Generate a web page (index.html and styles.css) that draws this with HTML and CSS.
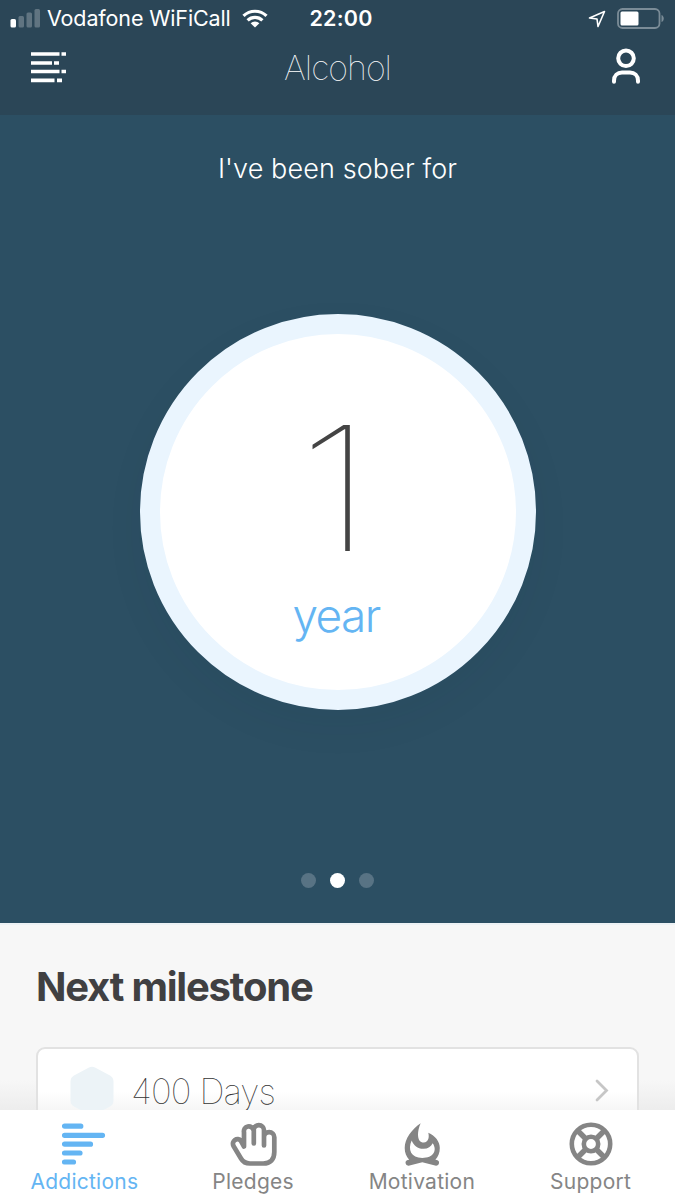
FILE: index.html
```html
<!DOCTYPE html>
<html lang="en">
<head>
<meta charset="utf-8">
<title>Alcohol</title>
<link rel="stylesheet" href="styles.css">
</head>
<body>
<div class="app">
  <header class="header">
    <div class="status">
      <div class="status-left">
        <svg class="signal" width="31" height="19" viewBox="0 0 31 19"><rect x="0.5" y="10" width="5.5" height="8.500" rx="1.500" fill="#fff"/><g fill="#fff" opacity=".25"><rect x="8.500" y="7" width="5.500" height="11.500" rx="1.500"/><rect x="16.500" y="3.500" width="5.500" height="15" rx="1.500"/><rect x="24.500" y="0" width="5.500" height="18.500" rx="1.500"/></g></svg>
        <span class="carrier">Vodafone WiFiCall</span>
        <svg class="wifi" width="26" height="19" viewBox="0 0 26 19"><path d="M1.500 6.900a16.500 16.500 0 0 1 23 0M5.600 11.300a10.600 10.600 0 0 1 14.800 0" fill="none" stroke="#fff" stroke-width="3.200"/><path d="M8.600 14.200a6.300 6.300 0 0 1 8.800 0L13 18.600z" fill="#fff"/></svg>
      </div>
      <span class="clock">22:00</span>
      <div class="status-right">
        <svg width="18" height="18" viewBox="0 0 18 18"><path d="M1.500 8 16.500 1.500 10 16.500 9 9z" fill="none" stroke="#fff" stroke-width="1.600" stroke-linejoin="round"/></svg>
        <svg width="48" height="21" viewBox="0 0 48 21"><rect x="1" y="1" width="41.500" height="19" rx="4.500" fill="none" stroke="#7b8c97" stroke-width="1.800"/><rect x="3.500" y="3.500" width="18" height="14" rx="1.500" fill="#fff"/><path d="M44.500 7c3 1 3 6 0 7z" fill="#7b8c97"/></svg>
      </div>
    </div>
    <nav class="navbar">
      <svg width="36" height="32" viewBox="0 0 36 32"><path d="M0 2h28.500M30.500 2H35M0 11h21M23 11h5M0 19.500h28.500M30.500 19.500H35M0 28.300h23.500M26 28.300h5" stroke="#fff" stroke-width="3.700"/></svg>
      <h1 class="title">Alcohol</h1>
      <svg class="user" width="30" height="36" viewBox="0 0 30 36"><g fill="none" stroke="#fff" stroke-width="4"><circle cx="15" cy="10.300" r="7.800"/><path d="M3 33.700v-1c0-5 3.500-8.200 8-8.200h8c4.500 0 8 3.200 8 8.200v1" stroke-linecap="round"/></g></svg>
    </nav>
  </header>
  <main class="content">
    <section class="hero">
      <p class="lead">I've been sober for</p>
      <div class="counter"><span class="number">1</span><span class="unit">year</span></div>
      <div class="dots"><i class="dot"></i><i class="dot dot-active"></i><i class="dot"></i></div>
    </section>
    <section class="milestone">
      <h2 class="heading">Next milestone</h2>
      <div class="card">
        <svg width="44" height="50" viewBox="0 0 44 50"><path d="M19 1.500q3-1.700 6 0l15 8q3.500 2 3.500 6v19q0 4-3.500 6l-15 8q-3 1.700-6 0l-15-8q-3.500-2-3.500-6v-19q0-4 3.500-6z" fill="#ecf3f7"/></svg>
        <span class="days">400 Days</span>
        <svg class="chevron" width="14" height="23" viewBox="0 0 14 23"><path d="M2 2l9.500 9.500L2 21" fill="none" stroke="#c6c6c6" stroke-width="2.800" stroke-linecap="round"/></svg>
      </div>
    </section>
  </main>
  <nav class="tabs">
    <a class="tab tab-active"><svg width="44" height="44" viewBox="0 0 44 44"><path d="M2.500 4.200h16.300M2.500 13.300h38M2.500 22.200h26M2.500 31h15.500M2.500 40h9" stroke="currentColor" stroke-width="5.200" stroke-linecap="round"/></svg><span>Addictions</span></a>
    <a class="tab"><svg width="48" height="44" viewBox="0 0 48 44"><path d="M15 24.500V10.300a4.900 4.900 0 0 1 9.600-2A5.100 5.100 0 0 1 35 8.300v7a5.100 5.100 0 0 1 10.300 0V30c0 7.500-4 11.500-11 11.500H21c-4 0-7-1.500-9-5L4.500 24c-2.500-5 4-9.500 7.500-5zM24.800 8v13.500M35 12v11.500" fill="none" stroke="currentColor" stroke-width="4.700" stroke-linecap="round" stroke-linejoin="round"/></svg><span>Pledges</span></a>
    <a class="tab"><svg width="38" height="44" viewBox="0 0 38 44"><path fill-rule="evenodd" d="M17.700 1.200C9 7 1.700 16.500 1.700 26c0 4.700 1.700 8.700 4.500 11.700L4.700 38A2.900 2.900 0 0 0 5.600 43.700L19.300 40.300l13.700 3.400A2.900 2.900 0 0 0 33.900 38l-1.500-.3C35.200 34.700 36.800 30.700 36.800 26c0-6.500-4.500-12-11.500-15.200C26.500 15.500 25.300 20.500 20.800 20.500 13.500 20.500 14 9 17.700 1.200zM8.700 18.500C10.500 23.500 15 27 20.500 26.800c4.500 0 7.500-2 9.200-5.500C34.500 28.500 30.500 36 19.300 36 8 36 4.500 27.500 8.700 18.500z" fill="currentColor"/></svg><span>Motivation</span></a>
    <a class="tab"><svg width="44" height="44" viewBox="0 0 44 44"><g fill="none" stroke="currentColor"><circle cx="22" cy="22" r="19.200" stroke-width="4.600"/><circle cx="22" cy="22" r="7.200" stroke-width="4.600"/><path d="M8.500 8.500l8.500 8.500M35.500 8.500L27 17M8.500 35.500L17 27M35.500 35.500L27 27" stroke-width="5.400"/></g></svg><span>Support</span></a>
  </nav>
</div>
</body>
</html>
```
FILE: styles.css
```css
* { box-sizing: border-box; }
body { margin: 0; font-family: Inter, "Liberation Sans", sans-serif; }
svg { display: block; flex: none; }
h1, h2, p { margin: 0; }
.app { width: 675px; height: 1200px; display: flex; flex-direction: column; overflow: hidden; }
.header { flex: none; height: 115px; background: #2b4657; color: #fff; }
.status { height: 37px; display: grid; grid-template-columns: 1fr auto 1fr; align-items: center; padding: 0 10px; line-height: 37px; }
.status-left { display: flex; align-items: center; }
.carrier { margin-left: 6px; width: 185px; font-size: 21.5px; letter-spacing: -0.13px; white-space: nowrap; }
.wifi { margin-left: 10px; }
.clock { width: 62px; margin-left: 6px; font-size: 21.5px; font-weight: 600; letter-spacing: 0.2px; }
.status-right { display: flex; align-items: center; justify-content: flex-end; gap: 11px; }
.navbar { height: 61px; display: grid; grid-template-columns: 36px 1fr 30px; align-items: center; padding: 0 34px 0 31px; }
.title { padding-right: 3px; text-align: center; font-size: 34px; font-weight: 100; letter-spacing: -1px; }
.user { margin-bottom: 3px; }
.content { flex: 1; min-height: 0; overflow: hidden; display: flex; flex-direction: column; }
.hero { flex: none; height: 808px; padding-top: 34px; background: #2c4f63; display: flex; flex-direction: column; align-items: center; }
.lead { color: #fff; font-size: 27px; font-weight: 300; line-height: 40px; letter-spacing: 0.1px; white-space: nowrap; }
.counter { width: 396px; height: 396px; margin-top: 125px; border: 20px solid #eaf5fe; border-radius: 50%; background: #fff; box-shadow: 0 16px 40px rgba(20, 40, 60, 0.05); display: flex; flex-direction: column; align-items: center; padding-top: 64px; }
.number { color: #444; font-size: 173px; font-weight: 100; line-height: 180px; transform: scaleX(1.18); transform-origin: 70% 50%; }
.unit { margin-right: 3px; color: #64b5f3; font-size: 46px; font-weight: 300; line-height: 74px; letter-spacing: -1.6px; }
.dots { display: flex; gap: 14px; margin-top: 163px; }
.dot { width: 15px; height: 15px; border-radius: 50%; background: #587384; }
.dot-active { background: #fff; }
.milestone { height: 187px; flex: none; padding: 37px 36px 0; background: linear-gradient(#f7f7f7 155px, #ececec 187px); border-top: 2px solid #edf2f5; }
.heading { color: #404042; font-size: 40px; font-weight: 700; line-height: 50px; letter-spacing: -1.2px; white-space: nowrap; }
.card { height: 90px; margin-top: 35px; padding: 0 28px 2px 32px; background: linear-gradient(#fff 42px, #f4f4f4 64px); border: 2px solid #e2e2e2; border-radius: 9px; display: flex; align-items: center; }
.days { flex: 1; margin-left: 17px; color: #333; font-size: 35px; font-weight: 100; line-height: 36px; letter-spacing: -0.9px; }
.chevron { margin-bottom: 2px; }
.tabs { height: 90px; flex: none; background: #fff; display: grid; grid-template-columns: repeat(4, 1fr); color: #858585; }
.tab { display: flex; flex-direction: column; align-items: center; padding-top: 12px; font-size: 21px; letter-spacing: 0.25px; line-height: 30px; }
.tab span { margin-top: 1px; }
.tab-active { color: #64b5f3; }
```
